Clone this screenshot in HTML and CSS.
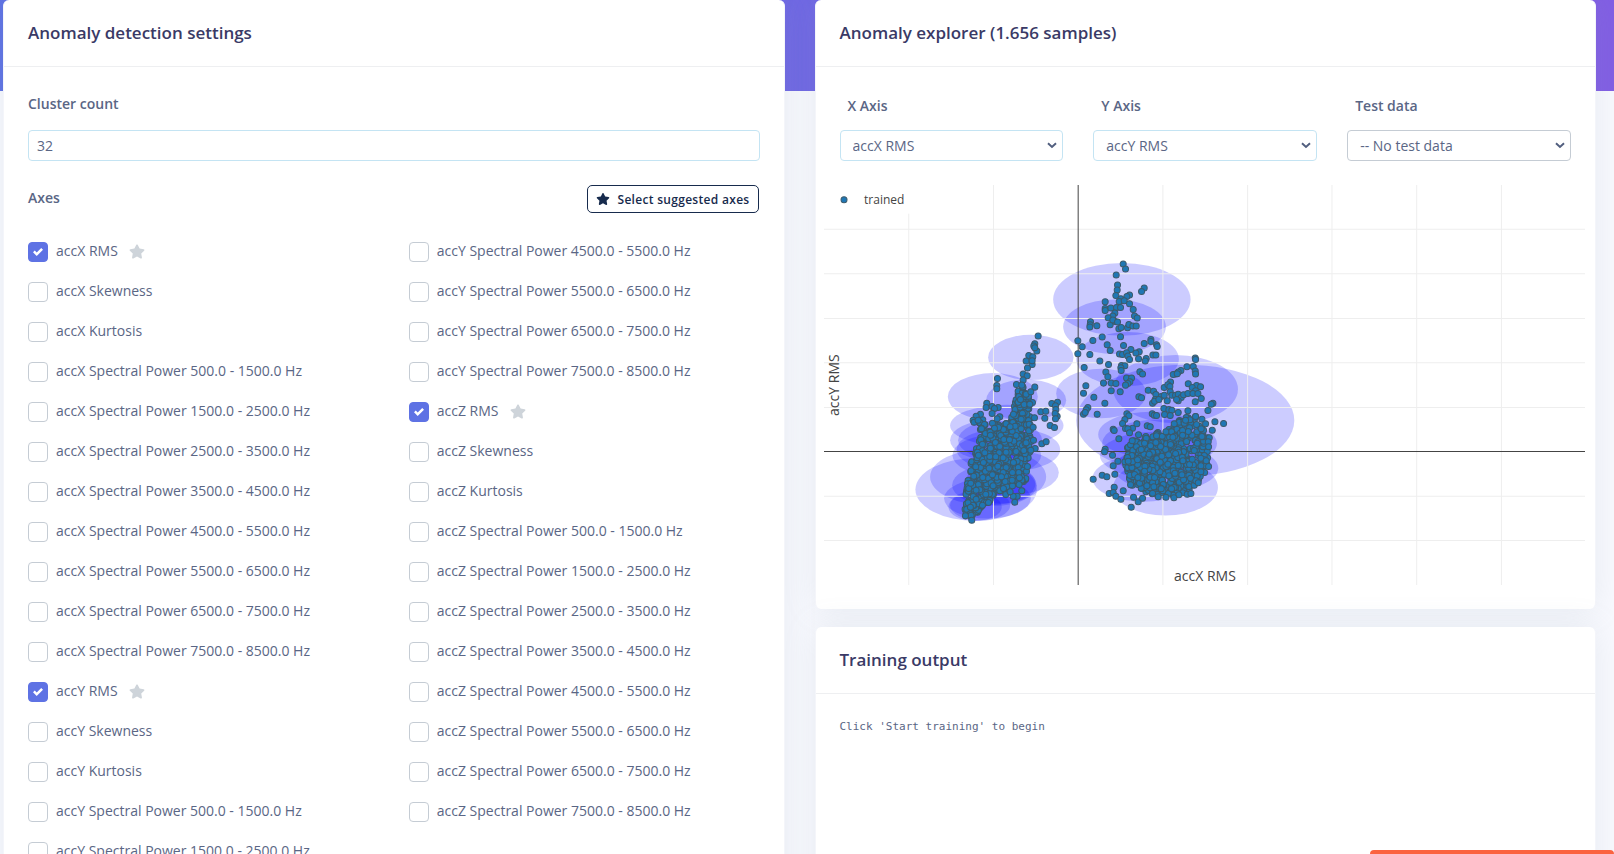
FILE: index.html
```html
<!DOCTYPE html>
<html lang="en">
<head>
<meta charset="utf-8">
<title>Anomaly detection</title>
<link rel="stylesheet" href="styles.css">
</head>
<body>
<svg class="sprite" aria-hidden="true">
  <symbol id="star" viewBox="0 0 576 512"><path d="M259.300 17.800L194 150.200 47.900 171.500c-26.200 3.800-36.700 36.100-17.700 54.600l105.700 103-25 145.500c-4.500 26.300 23.200 46 46.400 33.700L288 439.600l130.700 68.700c23.200 12.200 50.900-7.400 46.400-33.700l-25-145.500 105.700-103c19-18.500 8.500-50.800-17.700-54.600L382 150.200 316.700 17.800c-11.700-23.600-45.600-23.900-57.400 0z"/></symbol>
</svg>
<main class="page">
  <section class="card">
    <header class="card-header"><h3>Anomaly detection settings</h3></header>
    <div class="card-body">
      <label class="label" for="clusters">Cluster count</label>
      <input class="control" id="clusters" type="text" value="32">
      <div class="axes-head">
        <span class="label">Axes</span>
        <button class="suggest" type="button"><svg class="suggest-icon"><use href="#star"/></svg>Select suggested axes</button>
      </div>
      <div class="axes" id="axes"></div>
    </div>
  </section>
  <div class="column">
    <section class="card">
      <header class="card-header"><h3>Anomaly explorer (1.656 samples)</h3></header>
      <div class="card-body explorer">
        <div class="filters">
          <div class="filter"><label class="label" for="xaxis">X Axis</label><select class="control" id="xaxis"><option>accX RMS</option></select></div>
          <div class="filter"><label class="label" for="yaxis">Y Axis</label><select class="control" id="yaxis"><option>accY RMS</option></select></div>
          <div class="filter"><label class="label" for="test">Test data</label><select class="control plain" id="test"><option>-- No test data</option></select></div>
        </div>
        <svg class="chart" id="chart" viewBox="0 0 2283 1200" role="img" aria-label="accX RMS against accY RMS">
          <g class="clusters" id="clusters-layer"></g>
          <g class="grid">
            <path d="M254 0V1200M508 0V1200M1016 0V1200M1270 0V1200M1523 0V1200M1777 0V1200M2031 0V1200"/>
            <path d="M0 133H2283M0 266H2283M0 400H2283M0 533H2283M0 667H2283M0 933H2283M0 1066H2283"/>
          </g>
          <path class="zero" d="M762 0V1200M0 799H2283"/>
          <g class="points" id="points"></g>
          <rect class="legend-box" x="0" y="0" width="262" height="86"/>
          <circle class="legend-dot" cx="60" cy="44" r="9"/>
          <text class="legend-text" x="120" y="57">trained</text>
          <text class="axis-title" x="1142" y="1187" text-anchor="middle">accX RMS</text>
          <text class="axis-title" transform="translate(45 600) rotate(-90)" text-anchor="middle">accY RMS</text>
        </svg>
      </div>
    </section>
    <section class="card output">
      <header class="card-header"><h3>Training output</h3></header>
      <div class="card-body"><pre class="log">Click 'Start training' to begin</pre></div>
    </section>
  </div>
</main>
<div class="toast"></div>
<script src="app.js"></script>
</body>
</html>
```
FILE: styles.css
```css
* { box-sizing: border-box; }
html { height: 100%; overflow: hidden; }
body {
  height: 100%;
  margin: 0;
  overflow: hidden;
  font-family: "Open Sans", sans-serif;
  font-size: 14px;
  line-height: 20px;
  color: #5a6685;
  background: linear-gradient(87deg, #5e72e4, #825ee4) top / 100% 91px no-repeat #f8f9fe;
}
.sprite { display: none; }
.page {
  display: grid;
  grid-template-columns: minmax(0, 1fr) minmax(0, 1fr);
  gap: 30px;
  min-height: 100%;
  padding: 0 18px 0 3px;
}
.column { display: flex; flex-direction: column; gap: 18px; }
.card {
  background: #fff;
  border: solid #f4f5fa;
  border-width: 0 1px;
  border-radius: 6px;
  box-shadow: 0 0 32px rgba(136, 152, 170, .15);
}
.card-header {
  padding: 20px 24px;
  border-bottom: 1px solid #eeeff1;
}
.card-header h3 {
  margin: 0;
  font-size: 17px;
  font-weight: 600;
  line-height: 26px;
  color: #3a3a66;
}
.card-body { padding: 24px; }
.output { flex: 1; }
.label {
  display: block;
  font-size: 14px;
  font-weight: 600;
  line-height: 26px;
}
.control {
  display: block;
  width: 100%;
  height: 31px;
  padding: 0 8px;
  font: inherit;
  color: inherit;
  background: #fff;
  border: 1px solid #c4e4f3;
  border-radius: 4px;
}
select.control {
  appearance: none;
  padding-left: 12px;
  background: url("data:image/svg+xml,%3Csvg xmlns='http://www.w3.org/2000/svg' width='10' height='7'%3E%3Cpath d='M1 1.300L5 5 9 1.300' fill='none' stroke='%23525f7f' stroke-width='2'/%3E%3C/svg%3E") right 5px center no-repeat #fff;
}
select.plain { border-color: #c5ccd4; }
.card-body > .control { margin-top: 13px; }
.axes-head {
  display: flex;
  align-items: flex-start;
  justify-content: space-between;
  margin-top: 24px;
}
.suggest {
  display: flex;
  align-items: center;
  gap: 8px;
  height: 28px;
  padding: 0 8px;
  margin-right: 1px;
  font-family: inherit;
  font-size: 12px;
  font-weight: 600;
  letter-spacing: .025em;
  color: #172b4d;
  background: #fff;
  border: 1px solid #172b4d;
  border-radius: 5px;
}
.suggest-icon { width: 14px; height: 12px; fill: #172b4d; }
.axes {
  display: grid;
  grid-template-columns: 1fr 1fr;
  grid-template-rows: repeat(18, 20px);
  grid-auto-flow: column;
  gap: 20px 30px;
  margin-top: 29px;
}
.axis { display: flex; align-items: center; }
.axis label { padding: 0 11px 2px 8px; }
.axis input {
  appearance: none;
  width: 20px;
  height: 20px;
  margin: 0;
  border: 1px solid #c5ccd4;
  border-radius: 4px;
  background: #fff;
}
.axis input:checked {
  border-color: #5e72e4;
  background: url("data:image/svg+xml,%3Csvg xmlns='http://www.w3.org/2000/svg' viewBox='0 0 8 8'%3E%3Cpath fill='%23fff' d='M6.564.75l-3.590 3.612-1.538-1.550L0 4.260 2.974 7.250 8 2.193z'/%3E%3C/svg%3E") center / 10px 10px no-repeat #5e72e4;
}
.axis-star { width: 16px; height: 15px; margin-bottom: 2px; fill: #ced4da; }
.filters { display: grid; grid-template-columns: repeat(3, 1fr); gap: 30px; }
.filter .label { padding: 2px 8px 0; margin-bottom: 11px; }
.chart { display: block; width: calc(100% + 30px); margin: 24px -16px 0; }
.clusters { fill: #00f; fill-opacity: .2; }
.grid { fill: none; stroke: #eee; stroke-width: 3; }
.zero { fill: none; stroke: #444; stroke-width: 3; }
.points, .legend-dot { fill: #1f77b4; stroke: #3c5a6b; stroke-width: 3; }
.legend-box { fill: #fff; }
.legend-text { font-size: 36px; fill: #444; }
.axis-title { font-size: 42px; fill: #444; }
.log {
  margin: 0;
  font-family: "DejaVu Sans Mono", monospace;
  font-size: 11px;
  line-height: 18px;
}
.toast {
  position: fixed;
  right: 0;
  bottom: 0;
  width: 244px;
  height: 4px;
  background: #fb6340;
  border-radius: 4px 4px 0 0;
}
```
FILE: app.js
```js
const bands = ["500.0 - 1500.0", "1500.0 - 2500.0", "2500.0 - 3500.0", "3500.0 - 4500.0",
  "4500.0 - 5500.0", "5500.0 - 6500.0", "6500.0 - 7500.0", "7500.0 - 8500.0"];
const axes = document.getElementById("axes");
for (const acc of ["accX", "accY", "accZ"]) {
  const names = ["RMS", "Skewness", "Kurtosis", ...bands.map(b => "Spectral Power " + b + " Hz")];
  names.forEach((name, i) => {
    const id = acc + i;
    const row = document.createElement("div");
    row.className = "axis";
    row.innerHTML = `<input type="checkbox" id="${id}"${i ? "" : " checked"}><label for="${id}">${acc} ${name}</label>` +
      (i ? "" : '<svg class="axis-star"><use href="#star"/></svg>');
    axes.append(row);
  });
}

// Two groups of samples, each with its own origin in the chart.
const groups = [
  {
    origin: [228, 165],
    count: 640,
    ellipses: [[392,352,128,68],[278,470,135,71],[378,480,120,62],[320,556,170,62],
      [325,628,155,66],[275,600,125,60],[290,645,133,62],[345,697,131,65],[264,710,174,85],
      [228,748,182,94],[262,775,130,60],[283,735,127,62],[225,800,80,42],[240,795,90,46],[300,600,126,60],[300,730,106,60]],
    outline: [[215,838],[192,828],[197,760],[202,715],[215,660],[238,600],[236,545],[250,535],[275,548],[330,550],[342,500],[350,455],[368,440],[390,470],[394,540],[396,600],[386,650],[380,720],[345,735],[300,755],[262,790]],
    points: [[414,288],[404,311],[401,318],[410,333],[404,323],[386,346],[398,350],[378,363],[396,373],[396,362],[382,384],[369,402],[381,407],[369,420],[404,441],[349,433],[365,435],[392,455],[292,415],[290,436],[290,446],[260,489],[258,502],[276,499],[294,502],[283,505],[276,520],[299,530],[291,536],[241,522],[228,528],[219,540],[222,546],[234,540],[455,490],[472,486],[466,497],[467,508],[422,515],[437,513],[434,534],[471,528],[465,520],[466,536],[450,556],[463,562],[425,611],[438,605],[405,625],[392,630],[397,487],[389,492],[361,478],[403,533],[399,561],[400,600],[344,786],[351,768],[365,752],[339,768],[317,763],[330,755],[357,733],[215,840],[196,827]]
  },
  {
    origin: [618, 165],
    count: 560,
    ellipses: [[275,178,206,109],[253,260,154,82],[292,357,154,81],[213,460,135,74],[436,447,187,102],[465,541,327,167],
      [362,583,158,68],[388,610,172,72],[375,645,166,70],[408,684,156,68],[340,715,153,70],[406,742,157,84]],
    outline: [[292,610],[330,583],[400,575],[450,535],[500,528],[522,570],[540,590],[532,660],[524,700],[495,735],[460,758],[430,772],[380,768],[330,750],[300,740],[295,715],[278,670],[285,635]],
    points: [[279,72],[286,87],[258,105],[262,135],[261,150],[257,166],[342,144],[334,154],[298,165],[290,169],[272,176],[267,184],[282,182],[298,191],[225,185],[225,205],[225,211],[242,204],[259,202],[271,202],[309,208],[254,219],[248,228],[234,233],[313,228],[321,234],[240,254],[255,244],[248,240],[262,246],[181,245],[180,254],[179,261],[200,257],[266,266],[273,262],[292,263],[296,253],[308,258],[318,258],[271,290],[216,291],[188,301],[143,302],[156,320],[231,314],[240,331],[280,316],[342,310],[362,298],[362,304],[379,314],[381,319],[302,328],[143,341],[179,343],[268,342],[277,343],[289,338],[327,335],[317,339],[293,348],[298,358],[325,356],[348,355],[345,363],[368,345],[377,345],[209,363],[235,373],[162,382],[274,376],[284,377],[272,383],[273,391],[227,396],[233,410],[329,395],[337,402],[289,414],[304,414],[299,425],[293,430],[286,435],[220,429],[243,429],[257,430],[167,437],[160,459],[243,452],[270,455],[191,471],[224,489],[173,502],[168,509],[160,522],[165,517],[201,522],[326,470],[334,473],[354,450],[370,453],[495,354],[496,358],[470,380],[489,379],[452,391],[495,393],[496,402],[444,396],[436,402],[429,403],[441,401],[421,426],[402,442],[413,434],[419,439],[474,431],[499,436],[511,440],[486,442],[496,452],[377,463],[393,469],[375,478],[367,489],[373,483],[386,478],[411,482],[402,465],[420,455],[425,465],[436,465],[444,462],[453,472],[444,482],[460,464],[473,460],[488,460],[503,460],[513,475],[495,485],[439,478],[401,505],[416,508],[425,510],[444,517],[473,512],[403,523],[420,526],[548,489],[543,492],[533,511],[366,521],[372,525],[379,526],[290,521],[296,527],[284,538],[277,550],[320,551],[286,565],[307,564],[293,566],[298,578],[249,567],[252,571],[266,596],[351,557],[360,560],[325,584],[515,537],[526,551],[554,545],[580,550],[546,570],[225,627],[223,635],[247,645],[263,663],[249,677],[254,702],[216,705],[230,710],[189,717],[252,741],[237,760],[249,757],[257,768],[279,752],[272,777],[310,771],[324,785],[303,801],[337,774],[384,770],[407,771],[431,773],[471,762],[482,760],[504,728],[535,679],[535,620],[528,662],[466,540],[496,529]]
  }
];

const inside = (x, y, poly) => poly.reduce((hit, [x1, y1], i) => {
  const [x2, y2] = poly[(i + 1) % poly.length];
  return (y1 > y) !== (y2 > y) && x < (x2 - x1) * (y - y1) / (y2 - y1) + x1 ? !hit : hit;
}, false);

let seed = 7;
const random = () => (seed = (seed * 16807) % 2147483647) / 2147483647;

for (const { origin: [ox, oy], count, ellipses, outline, points } of groups) {
  document.getElementById("clusters-layer").innerHTML += ellipses
    .map(([x, y, rx, ry]) => `<ellipse cx="${x + ox}" cy="${y + oy}" rx="${rx}" ry="${ry}"/>`).join("");
  const all = [];
  while (all.length < count) {
    const x = 180 + random() * 380, y = 420 + random() * 430;
    if (inside(x, y, outline)) all.push([Math.round(x), Math.round(y)]);
  }
  document.getElementById("points").innerHTML += all.concat(points)
    .map(([x, y]) => `<circle cx="${x + ox}" cy="${y + oy}" r="9"/>`).join("");
}
```
